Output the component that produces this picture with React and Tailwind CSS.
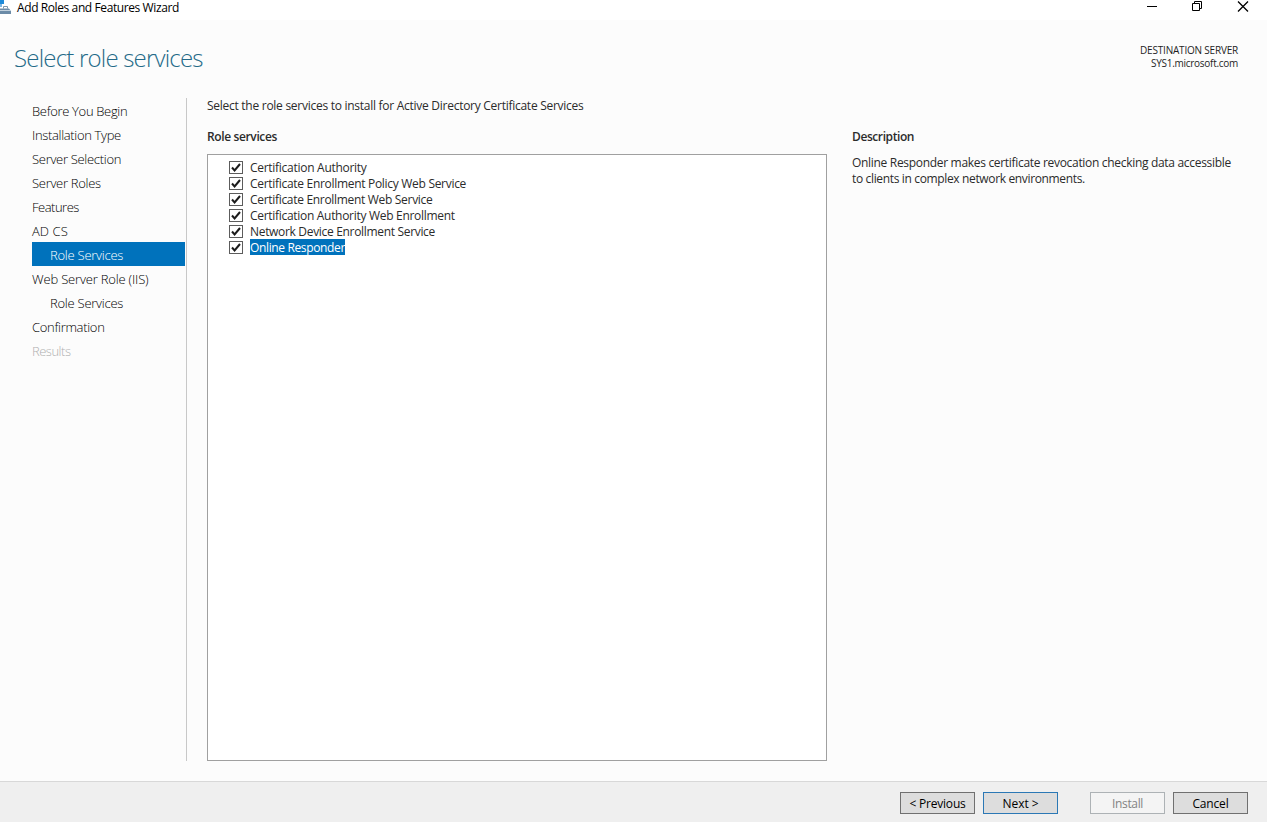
const NAV = [
  { label: 'Before You Begin', track: 'tracking-[-0.33px]' },
  { label: 'Installation Type', track: 'tracking-[-0.34px]' },
  { label: 'Server Selection', track: 'tracking-[-0.3px]' },
  { label: 'Server Roles', track: 'tracking-[-0.3px]' },
  { label: 'Features', track: 'tracking-[-0.5px]' },
  { label: 'AD CS', track: 'tracking-[0.05px]' },
  { label: 'Role Services', track: 'tracking-[-0.25px]', sub: true, active: true },
  { label: 'Web Server Role (IIS)', track: 'tracking-[-0.18px]' },
  { label: 'Role Services', track: 'tracking-[-0.25px]', sub: true },
  { label: 'Confirmation', track: 'tracking-[-0.31px]' },
  { label: 'Results', track: 'tracking-[-0.5px]', disabled: true },
];

const SERVICES = [
  { label: 'Certification Authority', track: 'tracking-[-0.28px]' },
  { label: 'Certificate Enrollment Policy Web Service', track: 'tracking-[-0.3px]' },
  { label: 'Certificate Enrollment Web Service', track: 'tracking-[-0.31px]' },
  { label: 'Certification Authority Web Enrollment', track: 'tracking-[-0.3px]' },
  { label: 'Network Device Enrollment Service', track: 'tracking-[-0.32px]' },
  { label: 'Online Responder', track: 'tracking-[-0.36px]', selected: true },
];

function TitleBar() {
  return (
    <header className="flex h-5 items-start bg-white text-black">
      <svg width="11" height="16" viewBox="0 0 11 16" className="shrink-0">
        <rect x="0" y="0" width="4" height="4" fill="#1f8ad8" />
        <rect x="0" y="4" width="2" height="3" fill="#7fb8e4" />
        <path d="M3.500 8.500V6.500h4v2" fill="none" stroke="#7d97ad" />
        <path d="M0 8.500h9l2 2.500v3H0z" fill="#6c8ca8" />
        <path d="M0 10.500h11" stroke="#c3d2de" />
      </svg>
      <span className="ml-1.5 text-[12px] leading-4 tracking-[-0.4px]">Add Roles and Features Wizard</span>
      <div className="ml-auto flex pr-[18px]">
        <svg width="102" height="14" viewBox="0 0 102 14" fill="none" stroke="#000">
          <path d="M0 6.500h10" />
          <path d="M45.500 3.500h7v7h-7zM47.500 3.500v-2h7v7h-2" />
          <path d="M91 1.500l10 10M101 1.500l-10 10" strokeWidth="1.300" />
        </svg>
      </div>
    </header>
  );
}

function CheckBox() {
  return (
    <svg width="14" height="14" viewBox="0 0 14 14" fill="none" className="shrink-0">
      <rect x="0.5" y="0.5" width="13" height="12" fill="#fff" stroke="#5c5c5c" />
      <path d="M3 6.500l2.600 3L11 3" stroke="#1c1c1c" strokeWidth="2" />
    </svg>
  );
}

function Button({ children, className }) {
  return (
    <button className={`flex h-[22px] w-[75px] items-center justify-center border pt-0.5 text-[12px] leading-4 ${className}`}>
      {children}
    </button>
  );
}

export default function App() {
  return (
    <div className="flex h-[822px] w-[1267px] flex-col overflow-hidden bg-[#fcfcfc] font-['Open_Sans',sans-serif] text-[12px] leading-4 text-[#2b2b2b]">
      <TitleBar />
      <div className="flex h-[78px] items-start justify-between pl-[14px] pr-[29px] pt-6">
        <h1 className="-mt-px text-[24px] font-light leading-[30px] tracking-[-0.8px] text-[#246a88]">Select role services</h1>
        <div className="text-right text-[10px] leading-[13px] text-[#1e1e1e]">
          <div className="tracking-[-0.2px]">DESTINATION SERVER</div>
          <div className="tracking-[-0.28px]">SYS1.microsoft.com</div>
        </div>
      </div>
      <main className="flex h-[683px]">
        <nav className="h-[663px] w-[187px] border-r border-[#c8c8c8] pl-8">
          {NAV.map((item, i) => (
            <div
              key={i}
              className={`h-6 w-[153px] whitespace-nowrap pt-0.5 text-[13px] font-light leading-[23px] ${item.track} ${item.sub ? 'pl-[18px]' : ''} ${
                item.active ? 'bg-[#0072bc] text-white' : item.disabled ? 'text-[#b0b0b0]' : 'text-black'
              }`}
            >
              {item.label}
            </div>
          ))}
        </nav>
        <section className="ml-5 flex w-[620px] flex-col">
          <p className="whitespace-nowrap tracking-[-0.27px]">Select the role services to install for Active Directory Certificate Services</p>
          <h2 className="mt-[15px] font-semibold tracking-[-0.37px]">Role services</h2>
          <div className="mt-[9px] h-[607px] border border-[#a0a0a0] bg-white pl-[21px] pt-[5px]">
            {SERVICES.map((s) => (
              <div key={s.label} className="flex h-4 items-center">
                <CheckBox />
                <span className={`ml-[7px] ${s.track} ${s.selected ? 'mb-0.5 h-4 bg-[#0072bc] leading-[18px] text-white' : 'leading-4'}`}>
                  {s.label}
                </span>
              </div>
            ))}
          </div>
        </section>
        <aside className="ml-[25px] pt-[31px]">
          <h2 className="font-semibold tracking-[-0.41px]">Description</h2>
          <p className="mt-2.5 whitespace-nowrap tracking-[-0.31px]">
            Online Responder makes certificate revocation checking data accessible
            <br />
            <span className="tracking-[-0.35px]">to clients in complex network environments.</span>
          </p>
        </aside>
      </main>
      <footer className="flex h-[41px] justify-end border-t border-[#d8d8d8] bg-[#efefef] pr-[19px] pt-2.5 text-black">
        <Button className="border-[#707070] bg-[#dddddd] tracking-[-0.2px]">&lt; Previous</Button>
        <Button className="ml-2 border-[#2b78b5] bg-[#dddddd] tracking-[-0.05px]">Next &gt;</Button>
        <Button className="ml-8 border-[#adb2b5] bg-[#f4f4f4] tracking-[-0.34px] text-[#838383]">Install</Button>
        <Button className="ml-2 border-[#707070] bg-[#dddddd] tracking-[-0.18px]">Cancel</Button>
      </footer>
    </div>
  );
}
